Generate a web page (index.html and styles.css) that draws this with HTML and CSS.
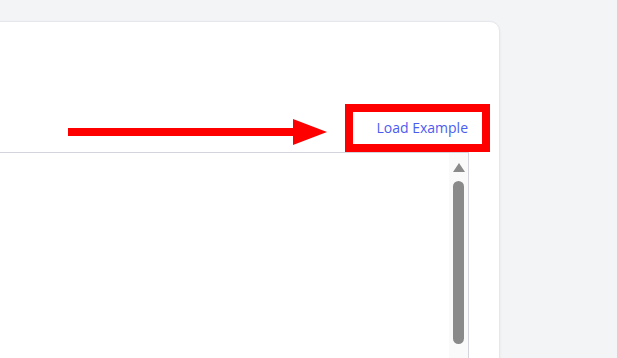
FILE: index.html
```html
<!DOCTYPE html>
<html>
<head>
<meta charset="utf-8">
<link rel="stylesheet" href="styles.css">
</head>
<body>
<div class="card">
  <div class="toolbar">
    <svg class="arrow" width="259" height="26" viewBox="0 0 259 26">
      <rect x="0" y="9" width="227" height="8" fill="#ff0000"/>
      <polygon points="225,0 259,13 225,26" fill="#ff0000"/>
    </svg>
    <div class="highlight">
      <button class="load-btn">Load Example</button>
    </div>
  </div>
  <div class="editor">
    <div class="editor-body"></div>
    <div class="scrollbar">
      <div class="scroll-up"></div>
      <div class="scroll-thumb"></div>
    </div>
  </div>
</div>
</body>
</html>
```

FILE: styles.css
```css
html, body {
  margin: 0;
  padding: 0;
  background: #f3f4f6;
  overflow: hidden;
  height: 358px;
}
body {
  padding-top: 21px;
  box-sizing: border-box;
  font-family: "Open Sans", "Noto Sans", sans-serif;
}
.card {
  margin-left: -200px;
  width: 700px;
  height: 352px;
  background: #ffffff;
  border: 1px solid #e5e7eb;
  border-radius: 10px;
  box-shadow: 0 1px 3px rgba(0, 0, 0, 0.06);
  padding: 82px 30px 0 0;
  box-sizing: border-box;
  display: flex;
  flex-direction: column;
}
.toolbar {
  display: flex;
  justify-content: flex-end;
  align-items: flex-start;
}
.arrow {
  display: block;
  margin-top: 15px;
  margin-right: 18px;
}
.highlight {
  border: 8px solid #ff0000;
  margin-right: -21px;
  padding: 0 14px 0 23px;
  height: 32px;
  display: flex;
  align-items: center;
}
.load-btn {
  background: none;
  border: 0;
  padding: 0;
  font-family: "Open Sans", "Noto Sans", sans-serif;
  font-size: 14px;
  line-height: 20px;
  color: #4b5cf0;
  cursor: pointer;
}
.editor {
  flex: 1;
  display: flex;
  border-top: 1px solid #d4d4dc;
  border-right: 1px solid #d4d4dc;
}
.editor-body {
  flex: 1;
}
.scrollbar {
  width: 19px;
  background: #fafafa;
  display: flex;
  flex-direction: column;
  align-items: center;
  padding-top: 10px;
}
.scroll-up {
  width: 0;
  height: 0;
  border-left: 6px solid transparent;
  border-right: 6px solid transparent;
  border-bottom: 9px solid #8a8a8a;
}
.scroll-thumb {
  margin-top: 9px;
  width: 11px;
  height: 163px;
  border-radius: 6px;
  background: #8a8a8a;
}
```
